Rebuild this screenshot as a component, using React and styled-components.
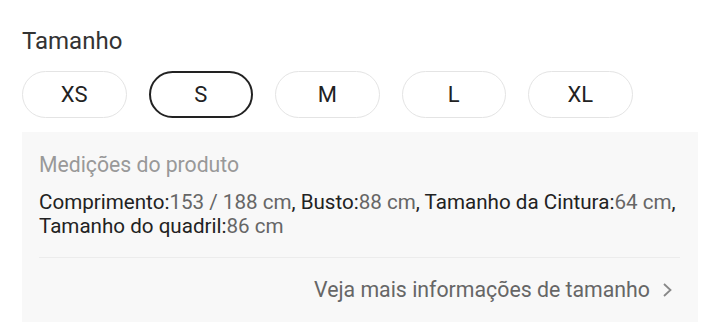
import React from "react";
import styled, { createGlobalStyle } from "styled-components";

const Global = createGlobalStyle`
  html, body { margin: 0; padding: 0; background: #fff; }
  body { font-family: Roboto, "Noto Sans", Arial, sans-serif; }
`;

const Page = styled.div`
  width: 720px;
  box-sizing: border-box;
  padding: 26px 22px 0 22px;
`;

const Title = styled.div`
  font-size: 24px;
  line-height: 30px;
  color: #333;
  height: 30px;
`;

const Sizes = styled.div`
  display: flex;
  gap: 22px;
  margin-top: 15px;
`;

const SizeButton = styled.button`
  width: 104.5px;
  height: 47px;
  box-sizing: border-box;
  border-radius: 24px;
  border: ${(p) => (p.$active ? "2px solid #222" : "1.5px solid #e4e4e4")};
  background: #fff;
  font-family: inherit;
  font-size: 22px;
  color: #222;
  display: flex;
  align-items: center;
  justify-content: center;
  padding: 0;
`;

const Panel = styled.div`
  margin-top: 14px;
  width: 676px;
  background: #f8f8f8;
  box-sizing: border-box;
  padding: 21px 17px 0 17px;
  height: 190px;
`;

const Label = styled.div`
  font-size: 21.2px;
  line-height: 24px;
  color: #999;
`;

const Specs = styled.div`
  margin-top: 13px;
  font-size: 20.6px;
  line-height: 24px;
  color: #222;
  padding-bottom: 19px;
  border-bottom: 1px solid #ececec;
  margin-right: 1px;
`;

const Val = styled.span`
  color: #666;
`;

const More = styled.div`
  display: flex;
  justify-content: flex-end;
  align-items: center;
  gap: 12px;
  padding: 20px 8px 0 0;
  font-size: 21.3px;
  line-height: 24px;
  color: #666;
`;

const Chevron = () => (
  <svg width="11" height="16" viewBox="0 0 11 16" fill="none">
    <path d="M2 2 L8.5 8 L2 14" stroke="#888" strokeWidth="1.8" />
  </svg>
);

const sizes = ["XS", "S", "M", "L", "XL"];

export default function App() {
  return (
    <Page>
      <Global />
      <Title>Tamanho</Title>
      <Sizes>
        {sizes.map((s) => (
          <SizeButton key={s} $active={s === "S"}>
            {s}
          </SizeButton>
        ))}
      </Sizes>
      <Panel>
        <Label>Medições do produto</Label>
        <Specs>
          Comprimento:<Val>153 / 188 cm</Val>, Busto:<Val>88 cm</Val>, Tamanho da Cintura:<Val>64 cm</Val>,
          <br />
          Tamanho do quadril:<Val>86 cm</Val>
        </Specs>
        <More>
          Veja mais informações de tamanho
          <Chevron />
        </More>
      </Panel>
    </Page>
  );
}
